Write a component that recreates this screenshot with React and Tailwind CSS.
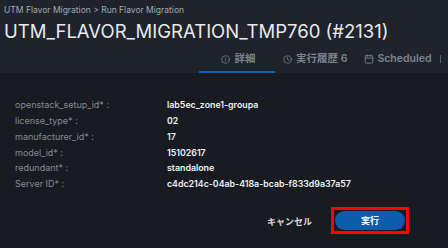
import { Info, Clock, Calendar } from 'lucide-react';

const fields = [
  { label: 'openstack_setup_id*', value: 'lab5ec_zone1-groupa' },
  { label: 'license_type*', value: '02' },
  { label: 'manufacturer_id*', value: '17' },
  { label: 'model_id*', value: '15102617' },
  { label: 'redundant*', value: 'standalone' },
  { label: 'Server ID*', value: 'c4dc214c-04ab-418a-bcab-f833d9a37a57' },
];

const App = () => {
  return (
    <div className="w-[448px] h-[248px] overflow-hidden bg-[#181b22] flex flex-col font-['Inter','Noto_Sans_CJK_JP',sans-serif]">
      <div className="h-[73px] bg-[#1f232b] flex flex-col">
        <div className="pl-[4px] pt-[4px] text-[8.5px] leading-[12px] text-[#a5a9b0]">
          UTM Flavor Migration &gt; Run Flavor Migration
        </div>
        <div className="pl-[4px] mt-[3px] text-[18.5px] leading-[24px] text-[#e8eaee] whitespace-nowrap">
          UTM_FLAVOR_MIGRATION_TMP760 (#2131)
        </div>
        <div className="mt-auto flex items-end pl-[199px] text-[10.5px] text-[#7d838d] font-semibold whitespace-nowrap">
          <div className="w-[76px] h-[26px] flex items-center justify-center gap-[5px] border-b-[2px] border-[#0b62b3] pl-[2px]">
            <Info size={9} strokeWidth={2} />
            <span>詳細</span>
          </div>
          <div className="ml-[8px] h-[26px] flex items-center gap-[4px] pb-[2px]">
            <Clock size={9} strokeWidth={2} />
            <span>実行履歴 6</span>
          </div>
          <div className="ml-[17px] h-[26px] flex items-center gap-[3px] pb-[2px]">
            <Calendar size={10} strokeWidth={2} />
            <span>Scheduled</span>
            <span className="ml-[6px] w-px h-[8px] bg-[#5b616b]"></span>
          </div>
        </div>
      </div>
      <div className="pt-[24px] pl-[15px] flex flex-col">
        {fields.map((f) => (
          <div key={f.label} className="flex h-[15.8px] items-center text-[9px]">
            <span className="w-[152px] text-[#858a93]">{f.label} :</span>
            <span className="text-[#eef0f3] font-semibold text-[8.8px]">{f.value}</span>
          </div>
        ))}
      </div>
      <div className="mt-auto mb-[14px] flex items-center justify-end pr-[39px] gap-[19px]">
        <button className="mt-[3px] text-[9px] font-bold text-[#d8dade]">キャンセル</button>
        <div className="border-[3px] border-[#ff0000] p-[1px] flex">
          <button className="w-[70px] h-[19px] rounded-full bg-[#0b5cab] text-white text-[9px] font-bold">
            実行
          </button>
        </div>
      </div>
    </div>
  );
};

export default App;
